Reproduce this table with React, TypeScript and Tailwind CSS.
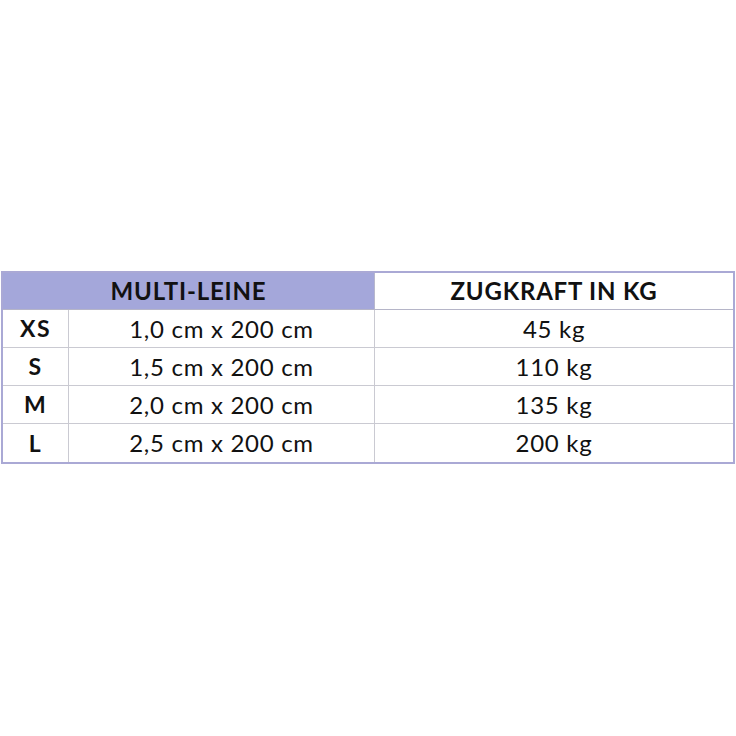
const rows = [
  { size: "XS", dims: "1,0 cm x 200 cm", pull: "45 kg" },
  { size: "S", dims: "1,5 cm x 200 cm", pull: "110 kg" },
  { size: "M", dims: "2,0 cm x 200 cm", pull: "135 kg" },
  { size: "L", dims: "2,5 cm x 200 cm", pull: "200 kg" },
];

export default function App() {
  return (
    <div className="w-[736px] h-[736px] bg-white pt-[271px] px-[1px] text-[#111111] font-['Lato',sans-serif]">
      <div className="border-2 border-[#aaa9d5]">
        <div className="flex h-[37px] border-b border-[#b5b5c8]">
          <div className="w-[371px] bg-[#a4a7da] flex items-center justify-center text-[24px] font-bold tracking-[0.8px]">
            MULTI-LEINE
          </div>
          <div className="flex-1 border-l border-[#b8b8cc] flex items-center justify-center text-[24px] font-bold tracking-[0.8px]">
            ZUGKRAFT IN KG
          </div>
        </div>
        {rows.map((r, i) => (
          <div
            key={r.size}
            className={`flex h-[38px] ${i < rows.length - 1 ? "border-b border-[#cacad2]" : ""}`}
          >
            <div className="w-[65px] flex items-center justify-center text-[23px] font-bold tracking-[1.5px]">
              {r.size}
            </div>
            <div className="w-[306px] border-l border-[#cacad2] flex items-center justify-center text-[24px] tracking-[0.7px]">
              {r.dims}
            </div>
            <div className="flex-1 border-l border-[#cacad2] flex items-center justify-center text-[24px] tracking-[0.7px]">
              {r.pull}
            </div>
          </div>
        ))}
      </div>
    </div>
  );
}
